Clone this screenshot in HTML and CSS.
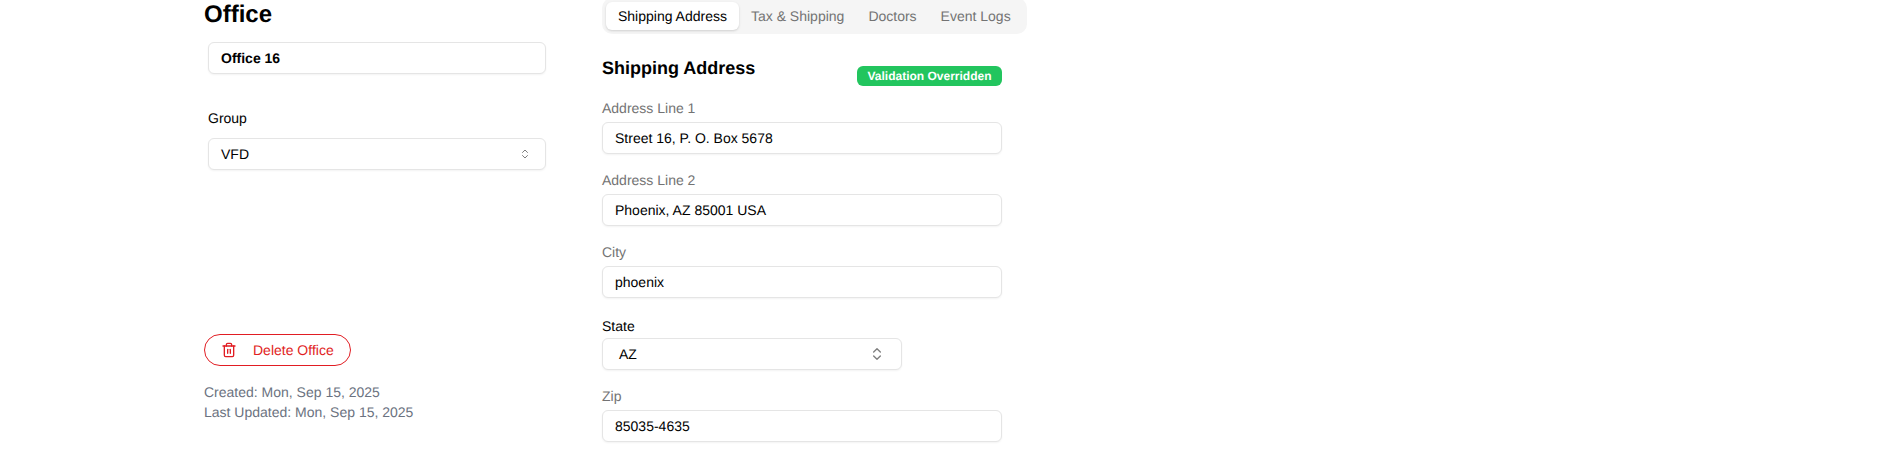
FILE: index.html
```html
<!DOCTYPE html>
<html lang="en">
<head>
<meta charset="utf-8">
<title>Office</title>
<link rel="stylesheet" href="styles.css">
</head>
<body>
<main class="page">
  <section class="side">
    <h1 class="side-title">Office</h1>
    <div class="side-fields">
      <div class="box box-name">Office 16</div>
      <div class="side-label">Group</div>
      <div class="box box-select">
        <span>VFD</span>
        <svg class="chev chev-sm" viewBox="0 0 24 24" aria-hidden="true"><path d="m7 15 5 5 5-5"/><path d="m7 9 5-5 5 5"/></svg>
      </div>
    </div>
    <button class="delete" type="button">
      <svg class="trash" viewBox="0 0 24 24" aria-hidden="true"><path d="M3 6h18"/><path d="M19 6v14c0 1-1 2-2 2H7c-1 0-2-1-2-2V6"/><path d="M8 6V4c0-1 1-2 2-2h4c1 0 2 1 2 2v2"/><line x1="10" x2="10" y1="11" y2="17"/><line x1="14" x2="14" y1="11" y2="17"/></svg>
      <span>Delete Office</span>
    </button>
    <div class="meta">
      <div>Created: Mon, Sep 15, 2025</div>
      <div>Last Updated: Mon, Sep 15, 2025</div>
    </div>
  </section>
  <section class="detail">
    <nav class="tabs">
      <span class="tab tab-active">Shipping Address</span>
      <span class="tab">Tax &amp; Shipping</span>
      <span class="tab">Doctors</span>
      <span class="tab">Event Logs</span>
    </nav>
    <div class="detail-head">
      <h2 class="detail-title">Shipping Address</h2>
      <span class="badge">Validation Overridden</span>
    </div>
    <div class="field">
      <label class="label">Address Line 1</label>
      <div class="box">Street 16, P. O. Box 5678</div>
    </div>
    <div class="field">
      <label class="label">Address Line 2</label>
      <div class="box">Phoenix, AZ 85001 USA</div>
    </div>
    <div class="field">
      <label class="label">City</label>
      <div class="box">phoenix</div>
    </div>
    <div class="field field-state">
      <label class="label label-dark">State</label>
      <div class="box box-select box-state">
        <span>AZ</span>
        <svg class="chev" viewBox="0 0 24 24" aria-hidden="true"><path d="m7 15 5 5 5-5"/><path d="m7 9 5-5 5 5"/></svg>
      </div>
    </div>
    <div class="field">
      <label class="label">Zip</label>
      <div class="box">85035-4635</div>
    </div>
  </section>
</main>
</body>
</html>
```
FILE: styles.css
```css
* { box-sizing: border-box; }
html, body { margin: 0; height: 450px; overflow: hidden; background: #fff; }
body { font-family: "Liberation Sans", Arial, sans-serif; font-size: 14px; line-height: 20px; color: #000; text-rendering: geometricPrecision; }
.page { display: flex; margin-top: -2px; padding-left: 204px; }
.side { width: 398px; display: flex; flex-direction: column; align-items: flex-start; }
.side-title { margin: 0; padding-top: 1px; font-size: 24px; line-height: 31px; font-weight: 700; }
.side-fields { width: 338px; margin: 12px 0 0 4px; }
.side-label { margin: 24px 0 0; padding: 10px 0; line-height: 20px; }
.box { width: 400px; height: 32px; display: flex; align-items: center; padding: 0 12px; background: #fff; border: 1px solid #e5e5e5; border-radius: 6px; box-shadow: 0 1px 2px rgba(0,0,0,.05); }
.side-fields .box { width: 100%; }
.box-name { font-weight: 700; }
.box-select { justify-content: space-between; }
.box-state { width: 300px; padding: 0 16px 0 16px; }
.chev { width: 16px; height: 16px; fill: none; stroke: #000; stroke-width: 2; stroke-linecap: round; stroke-linejoin: round; opacity: .5; }
.chev-sm { width: 12px; height: 12px; margin-right: 2px; }
.delete { display: flex; align-items: center; height: 32px; width: 147px; margin-top: 164px; padding: 0 16px; gap: 16px; background: #fff; border: 1px solid #e11d23; border-radius: 999px; color: #e11d23; font: inherit; text-rendering: inherit; }
.trash { width: 16px; height: 16px; fill: none; stroke: currentColor; stroke-width: 2; stroke-linecap: round; stroke-linejoin: round; }
.meta { margin-top: 16px; color: #6b7280; }
.detail { width: 425px; }
.tabs { display: flex; align-items: center; height: 36px; padding: 4px; gap: 0; background: #f5f5f5; border-radius: 10px; }
.tab { height: 28px; display: flex; align-items: center; padding: 0 12px; color: #737373; border-radius: 6px; }
.tab-active { color: #000; background: #fff; box-shadow: 0 1px 3px rgba(0,0,0,.1), 0 1px 2px rgba(0,0,0,.06); }
.detail-head { display: flex; justify-content: space-between; width: 400px; margin-top: 20px; height: 36px; }
.detail-title { margin: 0; font-size: 18px; line-height: 28px; font-weight: 700; }
.badge { align-self: flex-end; height: 20px; margin-bottom: 4px; padding: 0 10.5px; display: flex; align-items: center; background: #22c55e; color: #fff; font-size: 12px; font-weight: 700; border-radius: 6px; }
.field { margin-top: 4px; padding-bottom: 8px; }
.label { display: block; height: 28px; line-height: 28px; color: #737373; }
.label-dark { color: #000; padding-top: 4px; line-height: 24px; }
```
